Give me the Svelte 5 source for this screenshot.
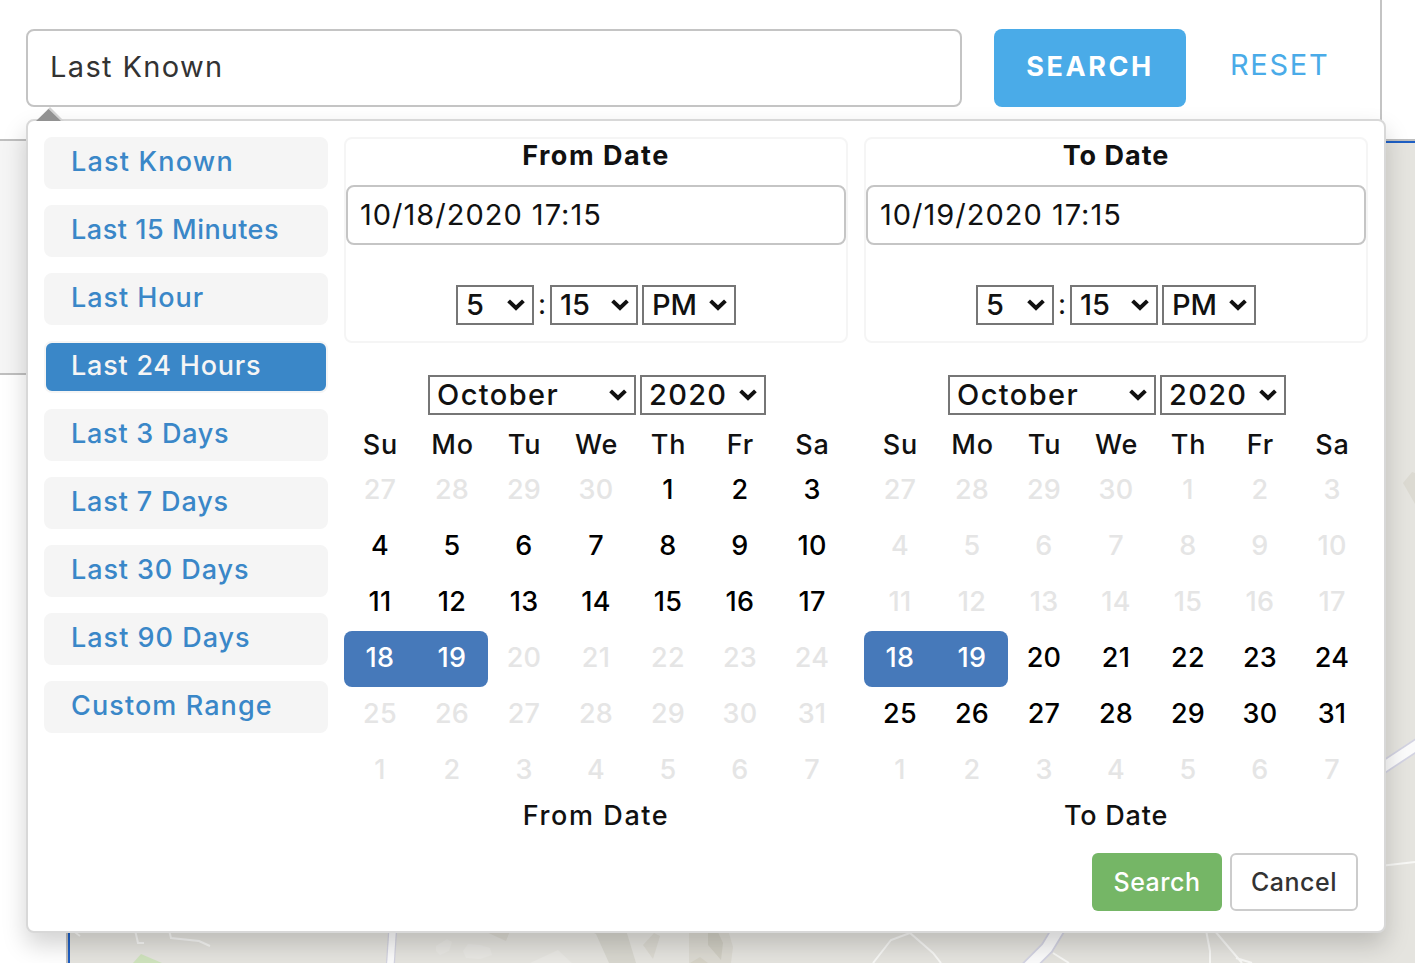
<script>
  const presets = [
    ['Last Known', 1.2], ['Last 15 Minutes', 0.55], ['Last Hour', 0.95],
    ['Last 24 Hours', 0.77], ['Last 3 Days', 0.75], ['Last 7 Days', 0.85],
    ['Last 30 Days', 0.9], ['Last 90 Days', 1], ['Custom Range', 1.1]
  ];
  const active = 'Last 24 Hours';
  const weekdays = ['Su', 'Mo', 'Tu', 'We', 'Th', 'Fr', 'Sa'];

  // October 2020 grid: starts on Sunday, September 27
  const days = Array.from({ length: 42 }, (_, i) => {
    const month = i < 4 ? 9 : i < 35 ? 10 : 11;
    const day = i < 4 ? 27 + i : i < 35 ? i - 3 : i - 34;
    return { month, day };
  });

  const panels = [
    { title: 'From Date', heading: 1.5, caption: 1.6, value: '10/18/2020 17:15', enabled: (d) => d.month === 10 && d.day <= 19 },
    { title: 'To Date', heading: 1, caption: 0.8, value: '10/19/2020 17:15', enabled: (d) => d.month === 10 && d.day >= 18 }
  ];

  const picked = (d) => d.month === 10 && (d.day === 18 || d.day === 19);
</script>

{#snippet dropdown(label, cls)}
  <button class="select {cls}">
    <span>{label}</span>
    <svg width="18" height="12" viewBox="0 0 18 12"><path d="M1.6 1.9 9 9 16.4 1.9" fill="none" stroke="#111" stroke-width="4" /></svg>
  </button>
{/snippet}

<div class="page">
  <header>
    <div class="bar">
      <div class="query">Last Known</div>
      <button class="go">SEARCH</button>
      <a class="reset" href="#reset">RESET</a>
    </div>
  </header>
  <main>
    <div class="side"></div>
    <svg class="map" width="1349" height="822" viewBox="66 141 1349 822">
      <rect x="66" y="141" width="1349" height="822" fill="#e5e4df" />
      <path d="M133 963 141 954 162 963Z" fill="#cfe3bd" />
      <g fill="#dcdad2">
        <path d="M436 946 447 939 452 942 449 951 440 955 436 951Z" fill="#e9e8e4" />
        <path d="M463 951 468 944 480 945 490 948 492 955 480 959 466 958Z" fill="#e9e8e4" />
        <path d="M484 931H510L506 941Z" />
        <path d="M530 963 558 950 572 963Z" fill="#eae9e5" />
        <path d="M588 930H626L636 963H609L596 934Z" fill="#d8d7cf" />
        <path d="M643 945 654 933 660 936 653 959Z" />
        <path d="M689 930H728L733 947 731 963H689V956Z" />
        <path d="M708 930H717L723 943 721 960 708 945Z" fill="#d0cec3" />
        <path d="M690 963 700 957 708 963Z" fill="#d5d2c6" />
        <path d="M1403 483 1412 472 1415 473V504Z" />
      </g>
      <g fill="none" stroke="#f8f8f6" stroke-width="2">
        <path d="M72 930 80 936M135 930 138 943H144M169 930 171 938 199 941 210 946" />
        <path d="M873 963 891 940 910 933 933 953 941 963" />
        <path d="M1206 930 1210 951V963M1214 930 1242 963M1236 958 1252 963M1053 953 1069 963M1380 866 1415 862" />
      </g>
      <g fill="none" stroke-linejoin="round">
        <path d="M393 925 390 970" stroke="#d3d3e0" stroke-width="9" />
        <path d="M393 925 390 970" stroke="#fbfbfb" stroke-width="6.500" />
        <path d="M1061 925 1047 948 1027 968" stroke="#d3d3e2" stroke-width="14" />
        <path d="M1061 925 1047 948 1027 968" stroke="#fbfbfb" stroke-width="10.500" />
        <path d="M1376 772 1426 739" stroke="#d3d3e2" stroke-width="13" />
        <path d="M1376 772 1426 739" stroke="#fbfbfb" stroke-width="9.500" />
      </g>
      <path d="M67 141V963" stroke="#bfbfbf" stroke-width="2" />
      <path d="M69 963V142H1415" fill="none" stroke="#1e5fc4" stroke-width="2" />
    </svg>
  </main>

  <svg class="caret" width="30" height="14" viewBox="0 0 30 14">
    <path d="M1 14 14 0 28 14Z" fill="#d2d2d2" /><path d="M0 14 12.500 2 25 14Z" fill="#929292" />
  </svg>
  <section class="popup">
    <div class="content">
      <ul class="presets">
        {#each presets as [label, spacing]}
          <li class:active={label === active} style:letter-spacing="{spacing}px">{label}</li>
        {/each}
      </ul>
      {#each panels as p}
        <div class="panel">
          <div class="box">
            <h3 style:letter-spacing="{p.heading}px">{p.title}</h3>
            <div class="value">{p.value}</div>
            <div class="time">
              {@render dropdown('5', 'hour')}<span class="colon">:</span>{@render dropdown('15', 'minute')}{@render dropdown('PM', 'half')}
            </div>
          </div>
          <div class="months">
            {@render dropdown('October', 'month')}{@render dropdown('2020', 'year')}
          </div>
          <div class="week">
            {#each weekdays as w}<span>{w}</span>{/each}
          </div>
          <div class="days">
            {#each days as d}
              <span class:on={p.enabled(d)} class:picked={picked(d)} class:first={picked(d) && d.day === 18} class:last={picked(d) && d.day === 19}>{d.day}</span>
            {/each}
          </div>
          <div class="caption" style:letter-spacing="{p.caption}px">{p.title}</div>
        </div>
      {/each}
    </div>
    <footer>
      <button class="apply">Search</button>
      <button class="cancel">Cancel</button>
    </footer>
  </section>
</div>

<style>
  :global(body) { margin: 0; background: #fff; }
  .page, .page * { box-sizing: border-box; }
  .page { position: relative; width: 1415px; height: 963px; overflow: hidden; font-family: Inter, sans-serif; color: #111; }
  button { margin: 0; padding: 0; border: 0; background: none; font-family: inherit; color: inherit; }
  header { height: 141px; border-bottom: 2px solid #bfbfbf; background: #fff; }
  .bar { display: flex; align-items: flex-start; width: 1382px; height: 139px; padding: 29px 0 0 26px; border-right: 2px solid #c4c4c4; }
  .query { width: 936px; height: 78px; padding-left: 22px; border: 2px solid #c4c4c4; border-radius: 8px; font-size: 29px; line-height: 72px; letter-spacing: 1.35px; color: #333; }
  .go { width: 192px; height: 78px; margin-left: 32px; padding-bottom: 4px; border-radius: 8px; background: #4aabe8; color: #fff; font-size: 27px; font-weight: 700; letter-spacing: 2.6px; }
  .reset { margin-left: 44px; color: #4aabe8; font-size: 29px; line-height: 72px; letter-spacing: 1.7px; text-decoration: none; }
  main { display: flex; height: 822px; }
  .side { width: 66px; height: 234px; flex: none; border-bottom: 2px solid #bfbfbf; background: #f5f5f5; }
  .map { display: block; flex: none; }
  .caret { position: absolute; left: 36px; top: 107px; z-index: 2; }
  .popup { position: absolute; left: 26px; top: 119px; width: 1360px; height: 814px; padding: 16px; border: 2px solid #d8d8d8; border-radius: 8px; background: #fff; box-shadow: 0 12px 24px rgba(0, 0, 0, 0.175); }
  .content { display: flex; gap: 16px; height: 696px; }
  .presets { display: flex; flex-direction: column; gap: 16px; width: 284px; margin: 0; padding: 0; list-style: none; }
  .presets li { height: 52px; padding-left: 25px; border: 2px solid #f5f5f5; border-radius: 8px; background: #f5f5f5; color: #3a87c8; font-size: 27px; font-weight: 450; line-height: 46px; white-space: nowrap; }
  .presets .active { background: #3a87c8; color: #f5f5f5; }
  .panel { width: 504px; }
  .box { height: 206px; border: 2px solid #f5f5f5; border-radius: 8px; }
  h3 { height: 46px; margin: 0; font-size: 27px; font-weight: 700; line-height: 34px; text-align: center; }
  .value { height: 60px; padding-left: 12px; border: 2px solid #c5c5c5; border-radius: 8px; font-size: 29px; line-height: 56px; letter-spacing: 1px; }
  .time { display: flex; justify-content: center; margin-top: 40px; }
  .months { display: flex; justify-content: center; gap: 4px; margin: 32px 0 0 2px; }
  .select { display: flex; align-items: center; justify-content: space-between; height: 40px; padding: 0 7px 1px 8px; border: 2px solid #767676; background: #fff; font-size: 29px; font-weight: 450; line-height: 35px; }
  .hour { width: 78px; }
  .minute { width: 88px; margin-right: 4px; }
  .half { width: 94px; }
  .month { width: 208px; padding-left: 7px; letter-spacing: 1.4px; }
  .year { width: 126px; padding-left: 7px; letter-spacing: 1.3px; }
  .colon { width: 16px; font-size: 28px; line-height: 38px; text-align: center; }
  .week { display: grid; grid-template-columns: repeat(7, 72px); height: 48px; font-size: 27px; font-weight: 450; line-height: 59px; text-align: center; letter-spacing: 0.8px; text-indent: 1px; }
  .days { display: grid; grid-template-columns: repeat(7, 72px); grid-auto-rows: 56px; font-size: 27px; line-height: 54px; font-weight: 500; text-align: center; letter-spacing: 0.3px; color: #e5e5e5; }
  .days .on { color: #000; }
  .days .picked { background: #4679ba; color: #fff; }
  .first { border-radius: 8px 0 0 8px; }
  .last { border-radius: 0 8px 8px 0; }
  .caption { font-size: 27px; font-weight: 450; line-height: 34px; text-align: center; }
  footer { display: flex; justify-content: flex-end; gap: 8px; margin-top: 20px; padding-right: 10px; }
  footer button { height: 58px; border-radius: 6px; font-size: 25px; font-weight: 450; letter-spacing: 0.5px; }
  .apply { width: 130px; background: #75b666; color: #fff; }
  .cancel { width: 128px; border: 2px solid #ccc; color: #333; background: #fff; }
</style>
